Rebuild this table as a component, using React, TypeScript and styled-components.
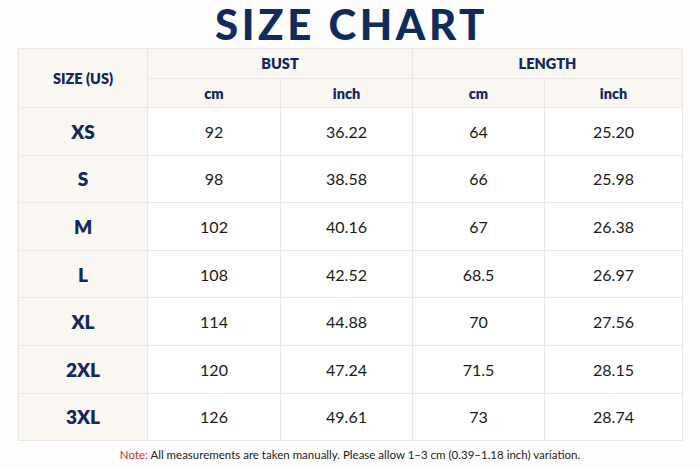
import React from "react";
import styled, { createGlobalStyle } from "styled-components";

const Global = createGlobalStyle`
  html, body { margin: 0; padding: 0; background: #fefefe; }
  body { font-family: Lato, "Open Sans", sans-serif; }
`;

const Page = styled.div`
  width: 700px;
  height: 467px;
  display: flex;
  flex-direction: column;
  align-items: center;
  background: #fefefe;
`;

const Title = styled.h1`
  margin: 0;
  height: 48px;
  display: flex;
  align-items: center;
  justify-content: center;
  font-family: Lato, sans-serif;
  font-weight: 900;
  font-size: 42px;
  letter-spacing: 3.6px;
  color: #0e2a5e;
  line-height: 1;
  padding-left: 3px;
`;

const Table = styled.div`
  width: 664px;
  display: grid;
  grid-template-columns: 129px 133px 132px 132px 138px;
  grid-template-rows: 30px 29px repeat(7, 47.6px);
  border-top: 1px solid #ebe7e3;
  border-left: 1px solid #ebe7e3;
  box-sizing: border-box;
`;

const Cell = styled.div<{ $head?: boolean; $span?: number; $rows?: number }>`
  display: flex;
  align-items: center;
  justify-content: center;
  border-right: 1px solid #ebe7e3;
  border-bottom: 1px solid #ebe7e3;
  background: ${(p) => (p.$head ? "#faf6f2" : "#ffffff")};
  grid-column: ${(p) => (p.$span ? `span ${p.$span}` : "auto")};
  grid-row: ${(p) => (p.$rows ? `span ${p.$rows}` : "auto")};
`;

const HeadText = styled.span`
  font-family: Lato, sans-serif;
  font-weight: 800;
  font-size: 14.5px;
  color: #13295a;
`;

const SizeText = styled.span`
  font-family: Lato, sans-serif;
  font-weight: 800;
  font-size: 19px;
  color: #13295a;
`;

const Num = styled.span`
  font-family: Lato, sans-serif;
  font-weight: 400;
  font-size: 16px;
  color: #1a1a1a;
`;

const Note = styled.p`
  margin: 7px 0 0;
  font-family: Lato, sans-serif;
  font-size: 11.5px;
  color: #222;
  text-align: center;
`;

const NoteLabel = styled.span`
  color: #e8202a;
`;

const rows: [string, string, string, string, string][] = [
  ["XS", "92", "36.22", "64", "25.20"],
  ["S", "98", "38.58", "66", "25.98"],
  ["M", "102", "40.16", "67", "26.38"],
  ["L", "108", "42.52", "68.5", "26.97"],
  ["XL", "114", "44.88", "70", "27.56"],
  ["2XL", "120", "47.24", "71.5", "28.15"],
  ["3XL", "126", "49.61", "73", "28.74"],
];

export default function App() {
  return (
    <Page>
      <Global />
      <Title>SIZE CHART</Title>
      <Table>
        <Cell $head $rows={2}>
          <HeadText>SIZE (US)</HeadText>
        </Cell>
        <Cell $head $span={2}>
          <HeadText>BUST</HeadText>
        </Cell>
        <Cell $head $span={2}>
          <HeadText>LENGTH</HeadText>
        </Cell>
        <Cell $head><HeadText>cm</HeadText></Cell>
        <Cell $head><HeadText>inch</HeadText></Cell>
        <Cell $head><HeadText>cm</HeadText></Cell>
        <Cell $head><HeadText>inch</HeadText></Cell>
        {rows.map((r) => (
          <React.Fragment key={r[0]}>
            <Cell $head><SizeText>{r[0]}</SizeText></Cell>
            {r.slice(1).map((v, i) => (
              <Cell key={i}><Num>{v}</Num></Cell>
            ))}
          </React.Fragment>
        ))}
      </Table>
      <Note>
        <NoteLabel>Note:</NoteLabel> All measurements are taken manually. Please allow 1–3 cm (0.39–1.18 inch) variation.
      </Note>
    </Page>
  );
}
